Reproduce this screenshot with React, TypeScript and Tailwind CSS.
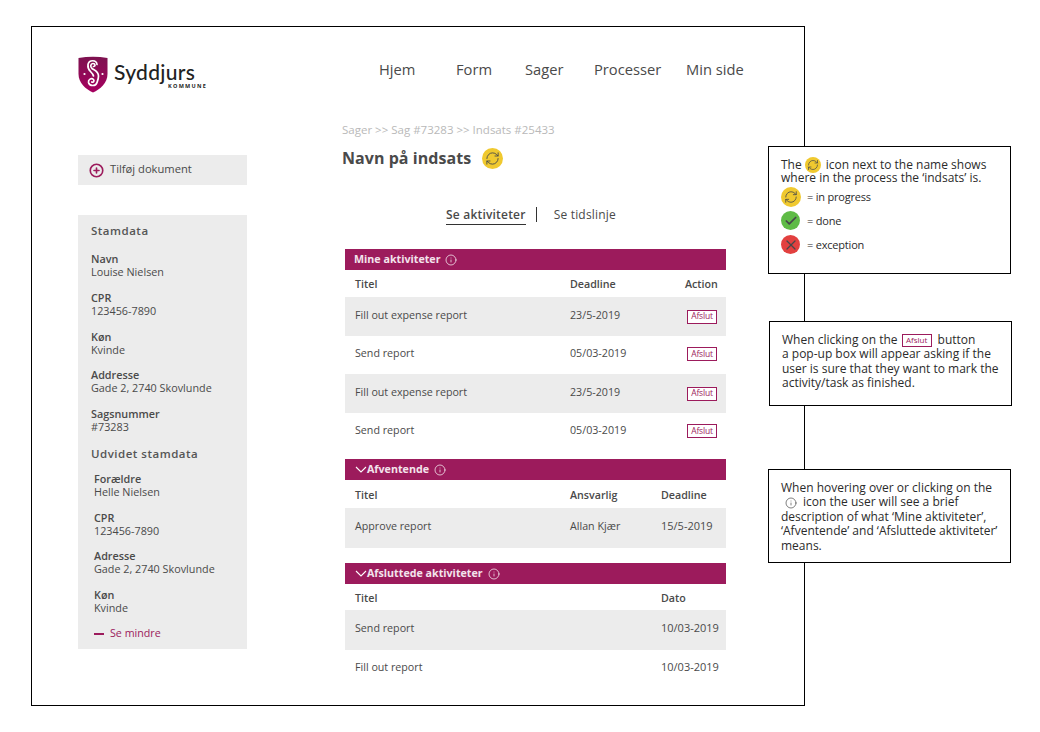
import React from "react";
import { Check, CirclePlus, Info, RefreshCw, X } from "lucide-react";

const font = { fontFamily: '"Open Sans", sans-serif' };

function Shield() {
  return (
    <svg width="30" height="37" viewBox="0 0 30 37" className="shrink-0">
      <defs>
        <linearGradient id="sg" x1="0" y1="0" x2="0" y2="1">
          <stop offset="0" stopColor="#7d1250" />
          <stop offset="1" stopColor="#a6005f" />
        </linearGradient>
      </defs>
      <path d="M0.5 2 C10 0.4 20 0.4 29.5 2 L29.5 18 C29.5 27 22 33.5 15 36.5 C8 33.5 0.5 27 0.5 18 Z" fill="url(#sg)" />
      <path d="M15.5 10.5 C17.5 10.5 17.5 7.5 15 7.5 C12.5 7.5 12 11 14 12.5 C16 14 20.5 15 20.5 20 C20.5 23 19.5 25 19 26.5 C18 30.5 11.5 30.5 10.5 26.5 C10 23.5 13.5 21.5 15.5 23.5 C16.8 25 15 27 13.8 26" fill="none" stroke="#fff" strokeWidth="1.7" strokeLinecap="round" />
      <path d="M19 8.5 C18.5 3.5 11 3.5 10 8.5 C9.5 12 11 14 12.5 15.5 C14 17 15 18 15.5 20" fill="none" stroke="#fff" strokeWidth="1.7" strokeLinecap="round" />
      <circle cx="6.5" cy="18" r="1.1" fill="#fff" />
      <circle cx="24.5" cy="18" r="1.1" fill="#fff" />
    </svg>
  );
}

function StatusIcon({ kind, size }: { kind: "progress" | "done" | "error"; size: number }) {
  const bg = kind === "progress" ? "bg-[#f0c92f]" : kind === "done" ? "bg-[#5fbb46]" : "bg-[#e2403f]";
  const inner = Math.round(size * 0.72);
  return (
    <span className={`${bg} inline-flex shrink-0 items-center justify-center rounded-full text-[#45474a]`} style={{ width: size, height: size }}>
      {kind === "progress" && <RefreshCw size={inner} strokeWidth={1.4} />}
      {kind === "done" && <Check size={inner} strokeWidth={3} />}
      {kind === "error" && <X size={inner + 2} strokeWidth={1.8} />}
    </span>
  );
}

function Afslut() {
  return (
    <span className="ml-[2px] inline-flex h-[14px] w-[30px] items-center justify-center border border-[#9c1b5c] bg-white text-[8.5px] tracking-[-0.2px] text-[#9c1b5c]">
      Afslut
    </span>
  );
}

function Field({ label, value }: { label: string; value: string }) {
  return (
    <div className="text-[10.8px] leading-[13px] text-[#4a4a4a]">
      <div className="font-semibold">{label}</div>
      <div>{value}</div>
    </div>
  );
}

function SectionBar({ title, chevron }: { title: string; chevron?: boolean }) {
  return (
    <div className={`flex h-[21px] items-center bg-[#9c1b5c] text-[10.7px] font-bold text-[#f3e4ec] ${chevron ? "pl-[10px]" : "pl-[9px]"}`}>
      {chevron && (
        <svg width="12" height="7" viewBox="0 0 12 7">
          <path d="M1 1 L6 6 L11 1" fill="none" stroke="#fff" strokeWidth="1.1" />
        </svg>
      )}
      <span>{title}</span>
      <Info size={12} strokeWidth={1.4} className={`text-white ${chevron ? "ml-[5px]" : "ml-[4px]"}`} />
    </div>
  );
}

function Row({ cols, grid, h, gray, head, pad }: { cols: React.ReactNode[]; grid: string; h: string; gray?: boolean; head?: boolean; pad?: string }) {
  return (
    <div className={`grid items-center pl-[10px] text-[10.7px] text-[#4a4a4a] ${grid} ${h} ${gray ? "bg-[#ececec]" : ""} ${head ? "pt-[2px] font-semibold" : ""} ${pad ?? ""}`}>
      {cols.map((c, i) => (
        <div key={i}>{c}</div>
      ))}
    </div>
  );
}

function Date11({ children }: { children: React.ReactNode }) {
  return <span className="text-[11px]">{children}</span>;
}

const g1 = "grid-cols-[215px_115px_1fr]";
const g2 = "grid-cols-[215px_91px_1fr]";
const g3 = "grid-cols-[306px_1fr]";

const callout = "absolute z-10 border border-black bg-white text-[12px] leading-[14.4px] text-[#2b2b2b]";

export default function App() {
  return (
    <div className="relative h-[732px] w-[1040px] overflow-hidden bg-white" style={font}>
      <div className="absolute left-[31px] top-[26px] h-[680px] w-[774px] border border-black">
        <header className="flex h-[93px] pl-[46px] pt-[29px]">
          <div className="flex h-[38px] w-[301px] items-start">
            <Shield />
            <div className="ml-[6px] mt-[4px]">
              <div className="text-[21px] font-medium leading-[24px] tracking-[0.3px] text-[#222]" style={{ fontFamily: "Lato, sans-serif" }}>Syddjurs</div>
              <div className="-mt-[1px] ml-[54px] text-[5.5px] font-bold leading-[6px] tracking-[1.3px] text-[#222]">KOMMUNE</div>
            </div>
          </div>
          <nav className="-mt-[1px] flex h-[28px] items-center text-[14.7px] text-[#4a4a4a]">
            <span className="w-[77px]">Hjem</span>
            <span className="w-[69px]">Form</span>
            <span className="w-[69px]">Sager</span>
            <span className="w-[92px]">Processer</span>
            <span>Min side</span>
          </nav>
        </header>
        <div className="flex pl-[46px]">
          <aside className="w-[169px] pt-[35px]">
            <div className="flex h-[30px] items-center bg-[#ececec] pb-[2px] pl-[11px] text-[11.2px] text-[#4a4a4a]">
              <CirclePlus size={15} strokeWidth={2.6} className="mr-[6px] mt-[2px] text-[#9c1b5c]" />
              Tilføj dokument
            </div>
            <div className="mt-[30px] h-[434px] bg-[#ececec] pl-[13px] pt-[8px]">
              <div className="text-[11.5px] font-semibold leading-[15px] tracking-[0.5px] text-[#555]">Stamdata</div>
              <div className="mt-[14px] flex flex-col gap-[12.75px]">
                <Field label="Navn" value="Louise Nielsen" />
                <Field label="CPR" value="123456-7890" />
                <Field label="Køn" value="Kvinde" />
                <Field label="Addresse" value="Gade 2, 2740 Skovlunde" />
                <Field label="Sagsnummer" value="#73283" />
              </div>
              <div className="mt-[13px] text-[11.5px] font-semibold leading-[15px] tracking-[0.5px] text-[#555]">Udvidet stamdata</div>
              <div className="mt-[11px] flex flex-col gap-[12.5px] pl-[3px]">
                <Field label="Forældre" value="Helle Nielsen" />
                <Field label="CPR" value="123456-7890" />
                <Field label="Adresse" value="Gade 2, 2740 Skovlunde" />
                <Field label="Køn" value="Kvinde" />
              </div>
              <div className="mt-[13.5px] flex items-center pl-[3px] text-[10.7px] leading-[13px] text-[#9c1b5c]">
                <span className="mr-[6px] h-[2px] w-[10px] bg-[#9c1b5c]" />
                Se mindre
              </div>
            </div>
          </aside>
          <main className="ml-[95px] w-[384px]">
            <div className="pt-[2px] text-[11.5px] leading-[16px] text-[#b9b9b9]">Sager &gt;&gt; Sag #73283 &gt;&gt; Indsats #25433</div>
            <div className="mt-[9px] flex h-[22px] items-center text-[16px] font-bold tracking-[0.05px] text-[#4a4a4a]">
              Navn på indsats
              <span className="ml-[11px] inline-flex"><StatusIcon kind="progress" size={21} /></span>
            </div>
            <div className="mt-[36px] flex h-[20px] text-[12px] tracking-[0.2px] text-[#4a4a4a]">
              <span className="ml-[104px] h-[20px] border-b border-[#333] font-semibold leading-[19px]">Se aktiviteter</span>
              <span className="ml-[10px] mr-[17px] mt-[2px] h-[15px] w-px bg-[#333]" />
              <span className="leading-[19px]">Se tidslinje</span>
            </div>
            <div className="ml-[3px] mt-[24px] w-[381px]">
              <SectionBar title="Mine aktiviteter" />
              <Row head grid={g1} h="h-[27px]" cols={["Titel", "Deadline", "Action"]} />
              <Row gray pad="pb-[2px]" grid={g1} h="h-[39px]" cols={["Fill out expense report", "23/5-2019", <Afslut />]} />
              <Row pad="pb-[4px]" grid={g1} h="h-[38px]" cols={["Send report", "05/03-2019", <Afslut />]} />
              <Row gray pad="pb-[2px]" grid={g1} h="h-[39px]" cols={["Fill out expense report", "23/5-2019", <Afslut />]} />
              <Row pad="pb-[4px]" grid={g1} h="h-[38px]" cols={["Send report", "05/03-2019", <Afslut />]} />
              <div className="mt-[8px]">
                <SectionBar chevron title="Afventende" />
                <Row head grid={g2} h="h-[28px]" cols={["Titel", "Ansvarlig", "Deadline"]} />
                <Row gray pad="pb-[4px]" grid={g2} h="h-[40px]" cols={["Approve report", "Allan Kjær", <Date11>15/5-2019</Date11>]} />
              </div>
              <div className="mt-[15px]">
                <SectionBar chevron title="Afsluttede aktiviteter" />
                <Row head grid={g3} h="h-[26px]" cols={["Titel", "Dato"]} />
                <Row gray pad="pb-[4px]" grid={g3} h="h-[40px]" cols={["Send report", <Date11>10/03-2019</Date11>]} />
                <Row pad="pb-[4px]" grid={g3} h="h-[38px]" cols={["Fill out report", <Date11>10/03-2019</Date11>]} />
              </div>
            </div>
          </main>
        </div>
      </div>

      <div className={`${callout} left-[768px] top-[146px] h-[128px] w-[243px] pl-[12px] pt-[10px]`}>
        <div className="flex h-[14.4px] items-center pt-[1px]">
          The<span className="ml-[3px] mr-[5px] inline-flex"><StatusIcon kind="progress" size={16} /></span>icon next to the name shows
        </div>
        <div>where in the process the ‘indsats’ is.</div>
        <div className="mt-[1px] flex flex-col gap-[4px] text-[11px] tracking-[-0.2px]">
          <div className="flex h-[20px] items-center gap-[6px]"><StatusIcon kind="progress" size={20} /><span>= in progress</span></div>
          <div className="flex h-[20px] items-center gap-[7px]"><StatusIcon kind="done" size={19} /><span>= done</span></div>
          <div className="flex h-[20px] items-center gap-[7px]"><StatusIcon kind="error" size={19} /><span>= exception</span></div>
        </div>
      </div>

      <div className={`${callout} left-[769px] top-[321px] h-[85px] w-[243px] pl-[12px] pt-[11px]`}>
        <div className="flex h-[14.4px] items-center">
          When clicking on the
          <span className="ml-[4px] mr-[6px] inline-flex h-[13px] w-[30px] items-center justify-center border border-[#9c1b5c] text-[8px] text-[#9c1b5c]">Afslut</span>
          button
        </div>
        <div>a pop-up box will appear asking if the</div>
        <div>user is sure that they want to mark the</div>
        <div>activity/task as finished.</div>
      </div>

      <div className={`${callout} left-[768px] top-[469px] h-[94px] w-[243px] pl-[12px] pt-[11px]`}>
        <div>When hovering over or clicking on the</div>
        <div className="flex h-[14.4px] items-center">
          <Info size={12} strokeWidth={1.2} className="ml-[4px] mr-[6px]" />
          icon the user will see a brief
        </div>
        <div>description of what ‘Mine aktiviteter’,</div>
        <div>‘Afventende’ and ‘Afsluttede aktiviteter’</div>
        <div>means.</div>
      </div>
    </div>
  );
}
